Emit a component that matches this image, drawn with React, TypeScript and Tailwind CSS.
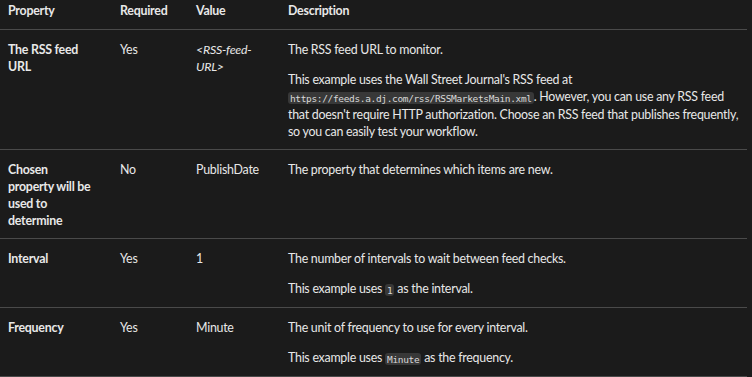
const rows = [
  {
    property: 'The RSS feed URL',
    required: 'Yes',
    value: <em>&lt;RSS-feed-URL&gt;</em>,
    description: [
      'The RSS feed URL to monitor.',
      <>
        This example uses the Wall Street Journal's RSS feed at <Code>https://feeds.a.dj.com/rss/RSSMarketsMain.xml</Code>.
        However, you can use any RSS feed that doesn't require HTTP authorization. Choose an RSS feed that publishes
        frequently, so you can easily test your workflow.
      </>,
    ],
  },
  {
    property: 'Chosen property will be used to determine',
    required: 'No',
    value: 'PublishDate',
    description: ['The property that determines which items are new.'],
  },
  {
    property: 'Interval',
    required: 'Yes',
    value: '1',
    description: [
      'The number of intervals to wait between feed checks.',
      <>
        This example uses <Code>1</Code> as the interval.
      </>,
    ],
  },
  {
    property: 'Frequency',
    required: 'Yes',
    value: 'Minute',
    description: [
      'The unit of frequency to use for every interval.',
      <>
        This example uses <Code>Minute</Code> as the frequency.
      </>,
    ],
  },
]

function Code({ children }: { children: React.ReactNode }) {
  return (
    <code className="rounded-[3px] bg-[#383838] px-[2px] py-[0.5px] font-['DejaVu_Sans_Mono',monospace] text-[9.5px] tracking-[-0.35px] text-[#d8d8d8]">
      {children}
    </code>
  )
}

export default function App() {
  return (
    <div className="min-h-[377px] w-[752px] bg-[#1b1b1b] font-['Lato',sans-serif] text-[12.4px] leading-[17px] tracking-[-0.25px] text-[#e8e8e8]">
      <table className="w-[747px] table-fixed border-collapse text-left">
        <colgroup>
          <col className="w-[112px]" />
          <col className="w-[76px]" />
          <col className="w-[92px]" />
          <col />
        </colgroup>
        <thead>
          <tr className="border-b border-[#4a4a4a]">
            {['Property', 'Required', 'Value', 'Description'].map((h) => (
              <th key={h} className="px-2 pb-[10px] pt-[2px] align-top font-bold">
                {h}
              </th>
            ))}
          </tr>
        </thead>
        <tbody>
          {rows.map((row) => (
            <tr key={row.property} className="border-b border-[#4a4a4a]">
              <td className="pb-[9px] pl-2 pr-[18px] pt-[11px] align-top font-bold">{row.property}</td>
              <td className="px-2 pb-[9px] pt-[11px] align-top">{row.required}</td>
              <td className="px-2 pb-[9px] pt-[11px] align-top">{row.value}</td>
              <td className="px-2 pb-[9px] pt-[11px] align-top">
                <div className="flex flex-col gap-[13px]">
                  {row.description.map((d, i) => (
                    <p key={i}>{d}</p>
                  ))}
                </div>
              </td>
            </tr>
          ))}
        </tbody>
      </table>
    </div>
  )
}
